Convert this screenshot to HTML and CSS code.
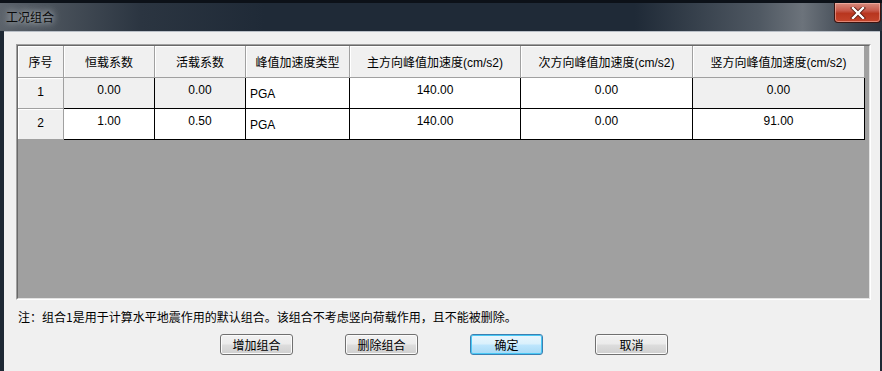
FILE: index.html
```html
<!DOCTYPE html>
<html lang="zh-CN">
  <head>
    <meta charset="UTF-8" />
    <title>工况组合</title>
    <link rel="stylesheet" href="styles.css">
  </head>
  <body>
    <div class="window">
      <div class="titlebar">
        <span class="title">工况组合</span>
        <span class="close-button">
          <svg width="16" height="12" viewBox="0 0 16 12">
            <path d="M3 1 L13 11 M13 1 L3 11" stroke="#5a1a10" stroke-width="4" stroke-linecap="square" />
            <path d="M3 1 L13 11 M13 1 L3 11" stroke="#ffffff" stroke-width="2.4" stroke-linecap="square" />
          </svg>
        </span>
      </div>

      <div class="client">
        <div class="grid-box">
          <div class="grid">
            <div class="cell head">序号</div>
            <div class="cell head">恒载系数</div>
            <div class="cell head">活载系数</div>
            <div class="cell head">峰值加速度类型</div>
            <div class="cell head">主方向峰值加速度(cm/s2)</div>
            <div class="cell head">次方向峰值加速度(cm/s2)</div>
            <div class="cell head">竖方向峰值加速度(cm/s2)</div>

            <div class="cell rowhead">1</div>
            <div class="cell num fixed">0.00</div>
            <div class="cell num fixed">0.00</div>
            <div class="cell text">PGA</div>
            <div class="cell num">140.00</div>
            <div class="cell num">0.00</div>
            <div class="cell num fixed">0.00</div>

            <div class="cell rowhead">2</div>
            <div class="cell num">1.00</div>
            <div class="cell num">0.50</div>
            <div class="cell text">PGA</div>
            <div class="cell num">140.00</div>
            <div class="cell num">0.00</div>
            <div class="cell num">91.00</div>
          </div>
        </div>

        <p class="note">注：组合1是用于计算水平地震作用的默认组合。该组合不考虑竖向荷载作用，且不能被删除。</p>

        <div class="buttons">
          <button>增加组合</button>
          <button>删除组合</button>
          <button class="default">确定</button>
          <button>取消</button>
        </div>
      </div>
    </div>
  </body>
</html>
```

FILE: styles.css
```css
body {
  margin: 0;
  width: 882px;
  height: 371px;
  overflow: hidden;
  background-color: #1e2834;
  font-family: "Liberation Sans", "Noto Sans CJK SC", sans-serif;
  font-size: 12px;
  color: #000;
}

.window {
  height: 371px;
  display: flex;
  flex-direction: column;
}

.titlebar {
  height: 31px;
  box-sizing: border-box;
  border-top: 3px solid #0c1118;
  display: flex;
  justify-content: space-between;
  align-items: flex-start;
  background: linear-gradient(90deg, #5c636b 0%, #4a525b 6%, #2b3541 16%, #1f2a37 30%, #1f2a37 72%, #4f5862 86%, #6c737b 91%, #3a434e 97%, #2a333e 100%);
}

.title {
  padding: 6px 0 0 6px;
  font-family: "Noto Sans CJK SC", sans-serif;
  font-size: 12px;
  line-height: 16px;
  color: #0a0a0a;
  text-shadow: 0 0 6px rgba(210, 215, 220, 0.9), 0 0 10px rgba(210, 215, 220, 0.7);
}

.close-button {
  width: 47px;
  height: 20px;
  margin-right: 1px;
  box-sizing: border-box;
  border: 1px solid #3b1410;
  border-top: none;
  border-radius: 0 0 4px 4px;
  background: linear-gradient(180deg, #d98c7e 0%, #c7594a 40%, #b8361f 55%, #c4452c 100%);
  box-shadow: inset 0 0 0 1px rgba(255, 200, 190, 0.5);
  display: flex;
  align-items: center;
  justify-content: center;
}

.client {
  flex: 1;
  margin: 0 2px 0 4px;
  padding: 12px 0 0 12px;
  background-color: #f0f0f0;
  border-top: 1px solid #b9bfc7;
}

.grid-box {
  width: 855px;
  height: 256px;
  box-sizing: border-box;
  border: 1px solid;
  border-color: #a0a0a0 #ffffff #ffffff #a0a0a0;
  background-color: #a0a0a0;
}

.grid {
  height: 100%;
  box-sizing: border-box;
  border: 1px solid;
  border-color: #696969 #e3e3e3 #e3e3e3 #696969;
  display: grid;
  grid-template-columns: 46px 91px 91px 104px 171px 172px 172px;
  grid-template-rows: 32px 31px 31px;
  align-content: start;
}

.cell {
  box-sizing: border-box;
  display: flex;
  align-items: center;
  justify-content: center;
  white-space: nowrap;
  background-color: #fff;
  border-right: 1px solid #000;
  border-bottom: 1px solid #000;
}

.head {
  background-color: #f0f0f0;
  border-color: #a0a0a0;
  box-shadow: inset 1px 1px 0 #ffffff;
  font-family: "Noto Sans CJK SC", sans-serif;
  padding-bottom: 1px;
}

.head:nth-child(n+4) {
  font-family: "Liberation Sans", "Noto Sans CJK SC", sans-serif;
}

.rowhead {
  background-color: #f0f0f0;
  border-color: #a0a0a0;
  box-shadow: inset 1px 1px 0 #ffffff;
  padding-bottom: 2px;
}

.num {
  padding-bottom: 6px;
}

.fixed {
  background-color: #f0f0f0;
}

.text {
  justify-content: flex-start;
  padding: 2px 0 0 4px;
}

.note {
  margin: 9px 0 0 2px;
  font-family: "Noto Sans CJK SC", sans-serif;
  font-size: 12px;
  line-height: 16px;
}

.buttons {
  display: flex;
  gap: 52px;
  margin: 9px 0 0 204px;
}

button {
  width: 73px;
  height: 21px;
  padding: 0;
  border: 1px solid #707070;
  border-radius: 3px;
  background: linear-gradient(180deg, #f2f2f2 0%, #ebebeb 48%, #dddddd 52%, #cfcfcf 100%);
  box-shadow: inset 0 0 0 1px #fbfbfb;
  font-family: "Noto Sans CJK SC", sans-serif;
  font-size: 12px;
  color: #000;
}

button.default {
  border-color: #3c7fb1;
  box-shadow: inset 0 0 0 1px #48c8f5;
  background: linear-gradient(180deg, #eaf6fd 0%, #d9f0fc 48%, #bee6fd 52%, #a7d9f5 100%);
}
```
